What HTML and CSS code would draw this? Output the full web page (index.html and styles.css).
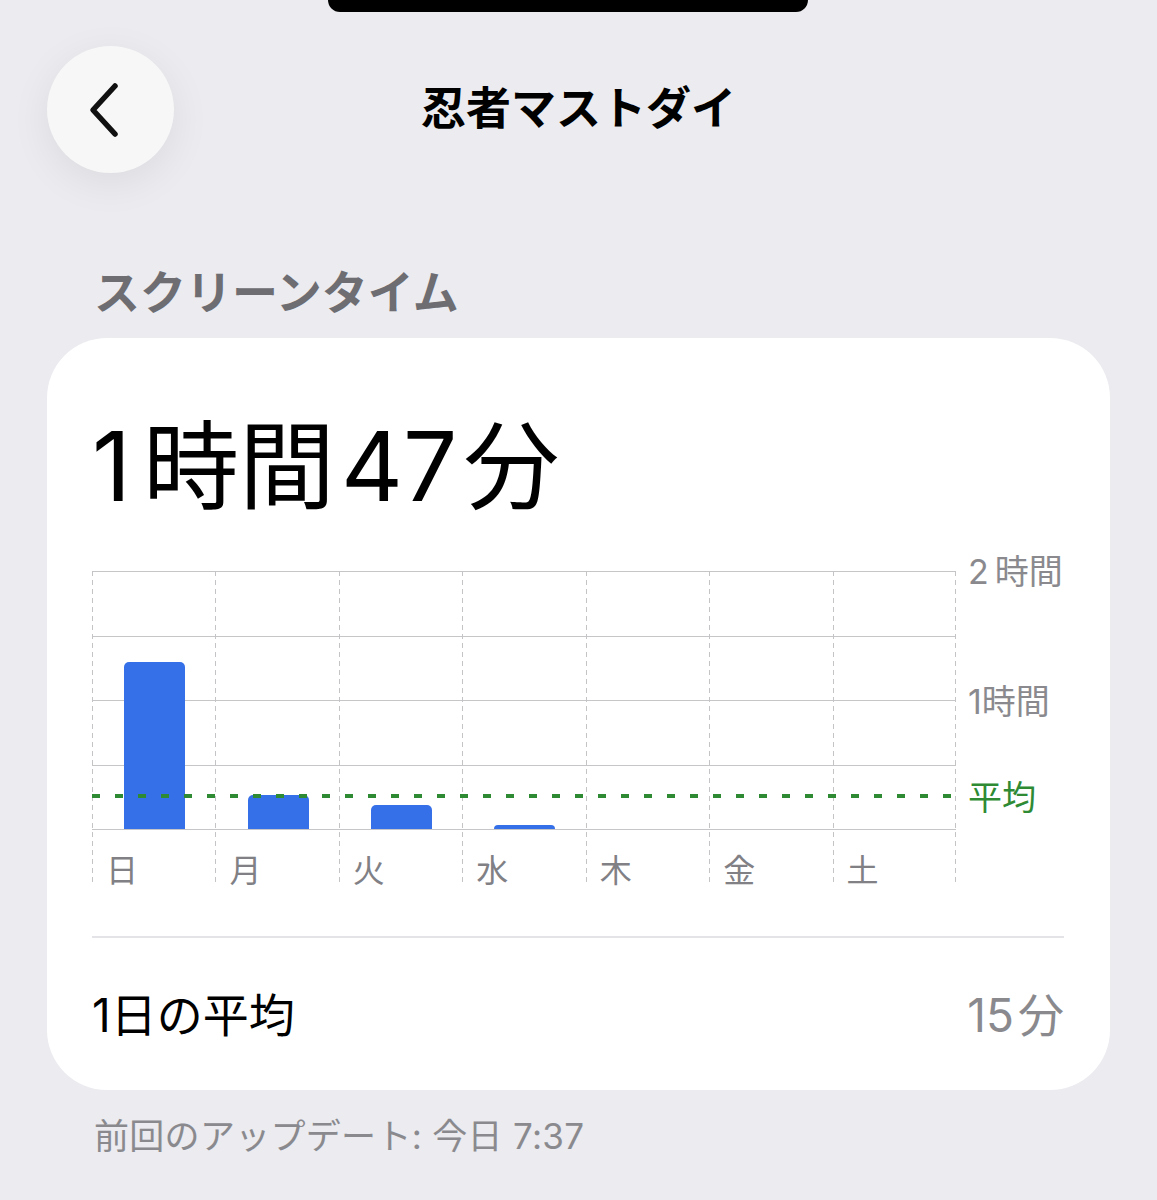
FILE: index.html
```html
<!DOCTYPE html>
<html lang="ja">
<head>
  <meta charset="UTF-8" /><meta name="viewport" content="width=device-width, initial-scale=1.0"/>
  <title>忍者マストダイ - スクリーンタイム</title>
  <link rel="stylesheet" href="styles.css">
</head>
<body>
  <div class="notch"></div>

  <header class="nav">
    <button class="back" aria-label="戻る">
      <svg width="40" height="56" viewBox="0 0 40 56"><path d="M28 4 L6 28 L28 52" /></svg>
    </button>
    <h1>忍者マストダイ</h1>
    <span></span>
  </header>

  <h2 class="section-title">スクリーンタイム</h2>

  <section class="card">
    <div class="total">1<span class="unit">時間</span><span class="num">47</span><span class="unit last">分</span></div>

    <div class="chart">
      <div class="plot">
        <div class="hlines"><div></div><div></div><div></div><div></div></div>
        <div class="cols">
          <div class="col"><div class="slot"><div class="bar" style="height:167px"></div></div><span class="day">日</span></div>
          <div class="col"><div class="slot"><div class="bar" style="height:34px"></div></div><span class="day">月</span></div>
          <div class="col"><div class="slot"><div class="bar" style="height:24px"></div></div><span class="day">火</span></div>
          <div class="col"><div class="slot"><div class="bar" style="height:4px"></div></div><span class="day">水</span></div>
          <div class="col"><div class="slot"></div><span class="day">木</span></div>
          <div class="col"><div class="slot"></div><span class="day">金</span></div>
          <div class="col"><div class="slot"></div><span class="day">土</span></div>
        </div>
        <div class="avg-line"></div>
      </div>
      <div class="axis">
        <span>2<span class="gap">時間</span></span>
        <span class="mid">1時間</span>
        <span class="avg">平均</span>
      </div>
    </div>

    <div class="summary">
      <span>1日の平均</span>
      <span class="value">15<span class="gap">分</span></span>
    </div>
  </section>

  <p class="updated">前回のアップデート: 今日 7:37</p>
</body>
</html>
```

FILE: styles.css
```css
* { box-sizing: border-box; margin: 0; padding: 0; }

body {
  background: #ebebf0;
  color: #000;
  font-family: Inter, "Noto Sans CJK JP", sans-serif;
  width: 1157px;
  min-height: 1200px;
}

.notch {
  width: 480px;
  height: 12px;
  margin-left: 328px;
  background: #000;
  border-radius: 0 0 34px 34px;
}

.nav {
  display: grid;
  grid-template-columns: 1fr auto 1fr;
  align-items: center;
  padding: 0 47px;
  margin-top: 34px;
}

.back {
  width: 127px;
  height: 127px;
  border-radius: 50%;
  border: none;
  background: #f7f7f7;
  box-shadow: 0 10px 40px rgba(0, 0, 0, 0.07);
  display: flex;
  align-items: center;
  justify-content: center;
  cursor: pointer;
}

.back svg {
  margin-left: -8px;
}

.back path {
  fill: none;
  stroke: #111;
  stroke-width: 5.5;
  stroke-linecap: round;
  stroke-linejoin: round;
}

.nav h1 {
  font-size: 45px;
  font-weight: 700;
  line-height: 52px;
  text-align: center;
  margin-top: -2px;
}

.section-title {
  font-size: 46px;
  font-weight: 700;
  line-height: 52px;
  color: #6d6d72;
  padding-left: 94px;
  margin-top: 93px;
}

.card {
  background: #fff;
  border-radius: 60px;
  margin: 20px 47px 0;
  padding: 72px 46px 49px 45px;
}

.total {
  font-size: 96px;
  line-height: 112px;
  font-weight: 400;
}

.total .unit {
  margin-left: 12px;
}

.total .unit.last {
  margin-left: 6px;
}

.total .num {
  margin-left: 6px;
}

/* chart */
.chart {
  display: flex;
  margin-top: 49px;
}

.plot {
  display: grid;
  width: 864px;
  flex-shrink: 0;
}

.plot > * {
  grid-area: 1 / 1;
}

.hlines {
  height: 259px;
  border-top: 1px solid #c6c6c9;
  display: flex;
  flex-direction: column;
}

.hlines div {
  flex: 1;
  border-bottom: 1px solid #c6c6c9;
}

.cols {
  display: grid;
  grid-template-columns: repeat(7, 1fr);
}

.col {
  background: repeating-linear-gradient(to bottom, #c4c4c7 0 5px, transparent 5px 9px) left top / 1px 100% no-repeat;
}

.col:last-child {
  background:
    repeating-linear-gradient(to bottom, #c4c4c7 0 5px, transparent 5px 9px) left top / 1px 100% no-repeat,
    repeating-linear-gradient(to bottom, #c4c4c7 0 5px, transparent 5px 9px) right top / 1px 100% no-repeat;
}

.slot {
  height: 258px;
  display: flex;
  align-items: flex-end;
  justify-content: center;
}

.bar {
  width: 61px;
  background: #3670e8;
  border-radius: 5px 5px 0 0;
  margin-left: 2px;
}

.day {
  display: block;
  height: 57px;
  padding: 25px 0 0 14px;
  font-size: 32px;
  line-height: 34px;
  color: #808085;
}

.avg-line {
  align-self: start;
  margin-top: 223px;
  height: 4px;
  background: repeating-linear-gradient(to right, #2f8a34 0 8px, transparent 8px 23px);
}

.axis {
  display: flex;
  flex-direction: column;
  align-items: flex-start;
  margin: -19px 0 0 12px;
  font-size: 34px;
  line-height: 40px;
  color: #8a8a8e;
  white-space: nowrap;
}

.axis .gap {
  margin-left: 6px;
}

.axis .mid {
  margin-top: 90px;
}

.axis .avg {
  margin-top: 56px;
  color: #2f8a34;
}

.summary {
  display: flex;
  justify-content: space-between;
  align-items: center;
  margin-top: 50px;
  padding-top: 51px;
  border-top: 2px solid #e3e3e8;
  font-size: 46px;
  line-height: 52px;
}

.summary .value {
  color: #8a8a8e;
}

.summary .gap {
  margin-left: 4px;
}

.updated {
  margin-top: 26px;
  padding-left: 94px;
  font-size: 35px;
  line-height: 40px;
  color: #8a8a8e;
  letter-spacing: 0.3px;
}
```
